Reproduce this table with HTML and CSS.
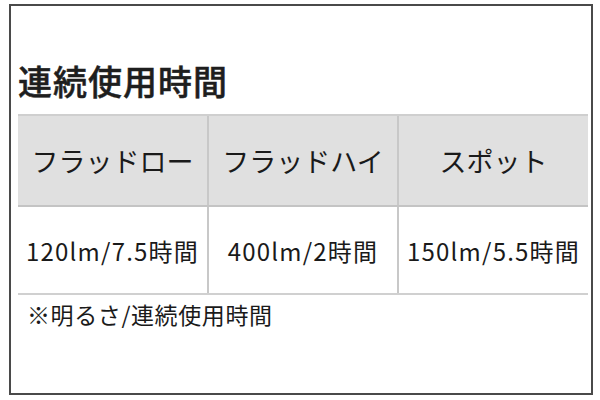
FILE: index.html
```html
<!DOCTYPE html>
<html lang="ja">
<head>
<meta charset="utf-8">
<link rel="stylesheet" href="styles.css">
</head>
<body>
<div class="frame">
  <h2 class="title">連続使用時間</h2>
  <table class="spec">
    <thead>
      <tr><th>フラッドロー</th><th>フラッドハイ</th><th>スポット</th></tr>
    </thead>
    <tbody>
      <tr><td>120lm/7.5時間</td><td>400lm/2時間</td><td>150lm/5.5時間</td></tr>
    </tbody>
  </table>
  <p class="note">※明るさ/連続使用時間</p>
</div>
</body>
</html>
```

FILE: styles.css
```css
html, body {
  margin: 0;
  padding: 0;
  background: #fff;
}
body {
  font-family: "Noto Sans CJK JP", "Noto Sans", sans-serif;
  color: #1a1a1a;
}
.frame {
  box-sizing: border-box;
  margin: 4px 0 0 9px;
  width: 584px;
  height: 391px;
  border: 2px solid #4a4a4a;
  padding: 0 3px 0 7px;
}
.title {
  margin: 50px 0 0 0;
  font-size: 34px;
  line-height: 50px;
  font-weight: 500;
  letter-spacing: 1px;
  color: #1e1e1e;
  -webkit-text-stroke: 0.5px #1e1e1e;
}
.spec {
  width: 570px;
  border-collapse: collapse;
  table-layout: fixed;
  margin-top: 8px;
}
.spec th, .spec td {
  text-align: center;
  padding: 0;
  font-weight: 400;
  white-space: nowrap;
}
.spec th {
  background: #e0e0e0;
  height: 89px;
  font-size: 27px;
  border-top: 2px solid #cfcfcf;
  border-bottom: 2px solid #c4c4c4;
}
.spec td {
  height: 86px;
  font-size: 24px;
  border-bottom: 2px solid #d0d0d0;
  letter-spacing: 1.2px;
}
.spec th + th, .spec td + td {
  border-left: 2px solid #c8c8c8;
}
.note {
  margin: 4px 0 0 9px;
  font-size: 23px;
  line-height: 30px;
  letter-spacing: 0.6px;
}
```
